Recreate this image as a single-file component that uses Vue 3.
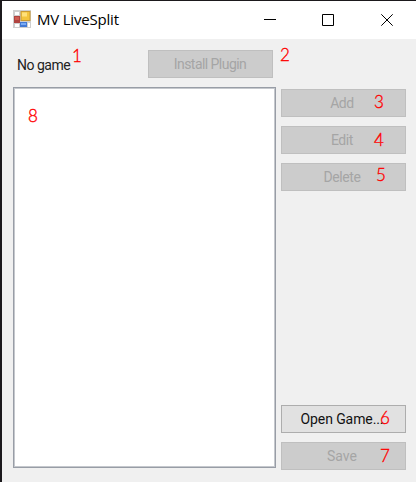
<script setup>
const editButtons = [
  { label: 'Add', note: 3 },
  { label: 'Edit', note: 4 },
  { label: 'Delete', note: 5 },
]
</script>

<template>
  <main class="window">
    <header class="titlebar">
      <svg class="app-icon" width="18" height="18" viewBox="0 0 18 18">
        <rect width="18" height="18" fill="#cfcfcf" />
        <path d="M2 2h4v3H2zM2 14h4v3H2zM15 13h2v4h-2z" fill="#fff" />
        <rect x="1" y="6" width="6" height="7" fill="#b04440" />
        <rect x="2" y="7" width="4" height="3" fill="#cf5c51" />
        <rect x="7.5" y="1" width="10" height="10" fill="#c99a34" />
        <rect x="8.5" y="2" width="8" height="8" fill="#f3c43c" />
        <rect x="9" y="2.5" width="5" height="4" fill="#ffe17a" />
        <rect x="7" y="12" width="7" height="5" fill="#4379d4" />
        <rect x="8" y="13" width="5" height="2" fill="#79aaf3" />
      </svg>
      <h1 class="title">MV LiveSplit</h1>
      <nav class="controls">
        <svg class="minimize" width="12" height="12" viewBox="0 0 12 12"><path d="M0 5.5h12" /></svg>
        <svg width="12" height="12" viewBox="0 0 12 12"><path d="M.5.5h11v11H.5z" /></svg>
        <svg width="12" height="12" viewBox="0 0 12 12"><path d="M.3.3l11.4 11.4M11.7.3L.3 11.7" /></svg>
      </nav>
    </header>

    <section class="toolbar">
      <span class="status">No game<b class="note note-1">1</b></span>
      <button class="btn install" disabled><span>Install Plugin</span><b class="note note-2">2</b></button>
    </section>

    <section class="content">
      <div class="list"><b class="note note-8">8</b></div>
      <aside class="actions">
        <div class="group">
          <button v-for="b in editButtons" :key="b.note" class="btn" disabled>
            <span>{{ b.label }}</span><b class="note" :class="'note-' + b.note">{{ b.note }}</b>
          </button>
        </div>
        <div class="group">
          <button class="btn open"><span>Open Game...</span><b class="note note-6">6</b></button>
          <button class="btn save" disabled><span>Save</span><b class="note note-7">7</b></button>
        </div>
      </aside>
    </section>
  </main>
</template>

<style>
body { margin: 0; overflow: hidden; }
</style>

<style scoped>
.window {
  box-sizing: border-box;
  width: 416px;
  height: 482px;
  border-left: 2px solid #1b191c;
  border-top: 1px solid #1b191c;
  background: #f0f0f0;
  font-family: Roboto, "Liberation Sans", sans-serif;
  display: flex;
  flex-direction: column;
}
.titlebar {
  height: 38px;
  flex: none;
  box-sizing: border-box;
  padding: 0 23px 0 11px;
  background: #fff;
  display: flex;
  align-items: center;
}
.app-icon { margin-bottom: 2px; }
.title {
  margin: 0 0 2px 6px;
  font: 400 15px/20px "Open Sans", "Noto Sans", sans-serif;
  letter-spacing: -0.2px;
  color: #000;
  white-space: nowrap;
}
.controls { margin-left: auto; display: flex; gap: 47px; }
.controls svg { fill: none; stroke: #000; stroke-width: 1; }
.controls .minimize { margin-right: -1px; }
.toolbar {
  height: 48px;
  flex: none;
  box-sizing: border-box;
  padding: 11px 0 0 15px;
  display: flex;
}
.status {
  position: relative;
  width: 131px;
  font-size: 14px;
  line-height: 31px;
  letter-spacing: -0.5px;
  color: #222;
}
.btn {
  position: relative;
  display: block;
  flex: none;
  box-sizing: border-box;
  width: 125px;
  height: 28px;
  margin: 0;
  padding: 0;
  border: 1px solid #adadad;
  background: #e1e1e1;
  color: #111;
  font: 400 14px/26px Roboto, "Liberation Sans", sans-serif;
  letter-spacing: -0.4px;
  text-align: center;
}
.btn span { margin-right: 3px; }
.btn:disabled { background: #ccc; border-color: #bfbfbf; color: #a5a5a5; }
.install { letter-spacing: -0.55px; }
.btn.install span { margin-right: 1px; }
.open { letter-spacing: -0.1px; }
.save { letter-spacing: 0; }
.content { display: flex; gap: 5px; padding-left: 11px; }
.list {
  position: relative;
  box-sizing: border-box;
  width: 263px;
  height: 381px;
  border: 1px solid #989da6;
  box-shadow: inset 0 0 0 1px #c5c8cd;
  background: #fff;
}
.actions {
  box-sizing: border-box;
  display: flex;
  flex-direction: column;
  justify-content: space-between;
  padding-top: 2px;
  height: 383px;
}
.group { display: flex; flex-direction: column; gap: 9px; }
.note {
  position: absolute;
  font: 300 17px/20px Lato, "Open Sans", sans-serif;
  letter-spacing: 0;
  color: #f00;
  -webkit-text-stroke: 0.35px #f00;
}
.note-1 { left: 55px; top: -4px; }
.note-2 { left: 131px; top: -6px; }
.note-3 { left: 92px; top: 2px; }
.note-4 { left: 92px; top: 3px; }
.note-5 { left: 94px; top: 1px; }
.note-6 { left: 98px; top: 2px; }
.note-7 { left: 98px; top: 3px; }
.note-8 { left: 14px; top: 18px; }
</style>
